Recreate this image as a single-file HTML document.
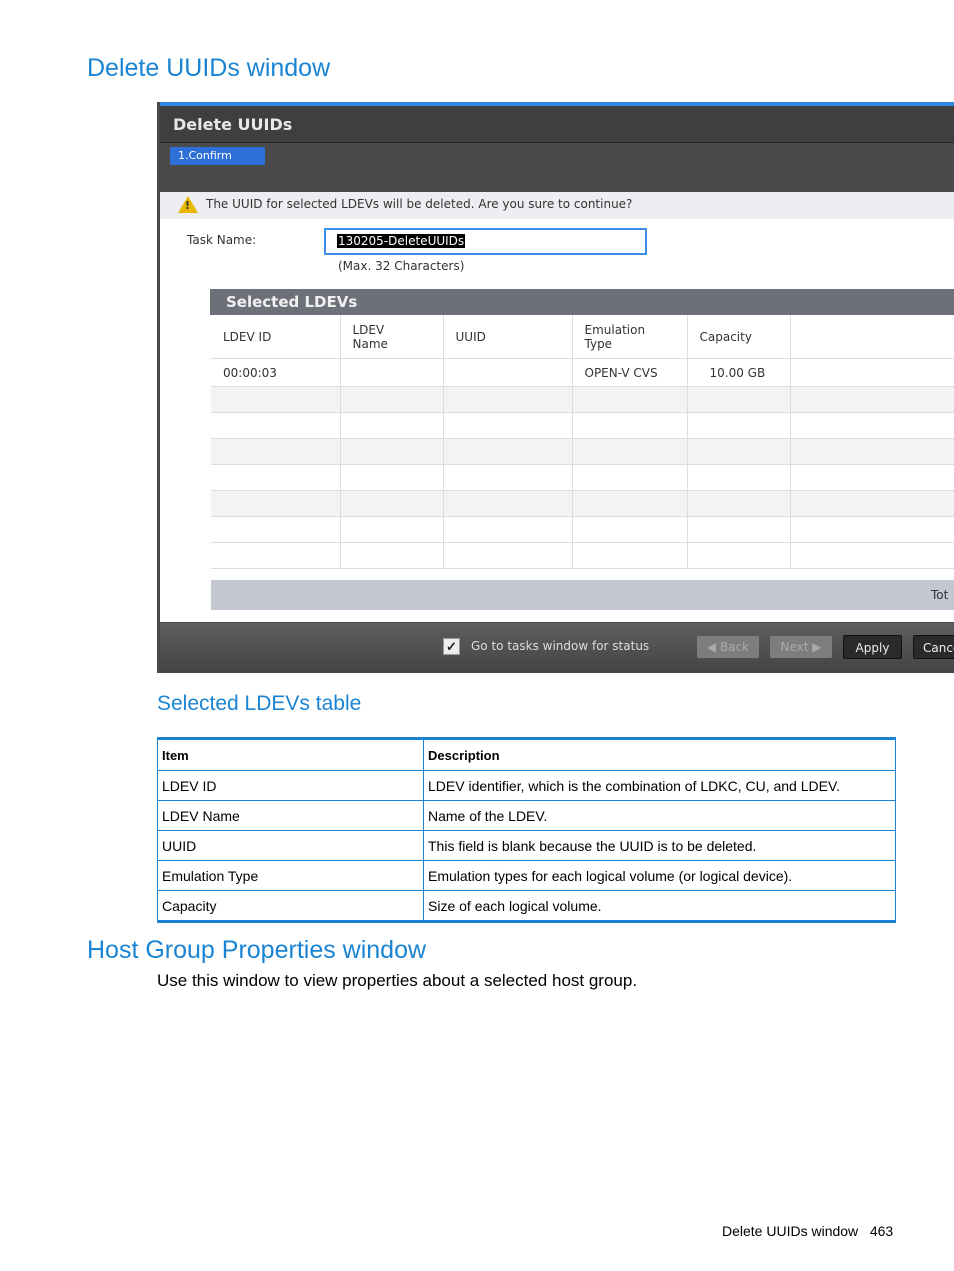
<!DOCTYPE html><html><head><style>
body{margin:0;width:954px;height:1271px;position:relative;background:#fff;font-family:"Liberation Sans",sans-serif;overflow:hidden}
.a{position:absolute}
h1{position:absolute;margin:0;font-weight:normal;color:#1a84d3;font-size:25px}
.s{font-family:"DejaVu Sans",sans-serif;font-size:12px;color:#333}
.dt{position:absolute;left:157px;top:737px;width:739px;border-collapse:collapse;font-size:14px;color:#000}
.dt td{border:1px solid #1a84d3;height:30px;padding:0 4px;box-sizing:border-box}
.dt tr:first-child td{border-top:3px solid #1a84d3;font-weight:bold;font-size:13px;height:32px}
.dt tr:last-child td{border-bottom:3px solid #1a84d3;height:31px}
.g td{border-right:1px solid #ddd;border-bottom:1px solid #ddd;height:25px;padding:0 12px}
</style></head><body>
<h1 style="left:87px;top:54px">Delete UUIDs window</h1>
<div class="a" style="left:157px;top:102px;width:797px;height:571px;background:#4a4a4a"></div>
<div class="a" style="left:160px;top:102px;width:794px;height:4px;background:#2d8be0"></div>
<div class="a" style="left:160px;top:106px;width:794px;height:36px;background:#3f3f3f;border-bottom:1px solid #222"></div>
<div class="a s" style="left:173px;top:115px;color:#e8e8e8;font-weight:bold;font-size:16px">Delete UUIDs</div>
<div class="a s" style="left:170px;top:147px;width:95px;height:18px;background:#2e6fd8;color:#fff;font-size:11px;line-height:18px;padding-left:8px;box-sizing:border-box">1.Confirm</div>
<div class="a" style="left:160px;top:192px;width:794px;height:430px;background:#fff"></div>
<div class="a" style="left:160px;top:192px;width:794px;height:27px;background:#eceef1"></div>
<div class="a" style="left:178px;top:196px;width:0;height:0;border-left:10px solid transparent;border-right:10px solid transparent;border-bottom:17px solid #e8b800"></div>
<div class="a s" style="left:185px;top:199px;font-size:11px;font-weight:bold">!</div>
<div class="a s" style="left:206px;top:197px">The UUID for selected LDEVs will be deleted. Are you sure to continue?</div>
<div class="a s" style="left:187px;top:233px">Task Name:</div>
<div class="a" style="left:324px;top:228px;width:323px;height:27px;border:2px solid #3d8ee6;box-sizing:border-box"></div>
<div class="a s" style="left:337px;top:234px;background:#000;color:#fff;padding:0 1px;line-height:14px">130205-DeleteUUIDs</div>
<div class="a s" style="left:338px;top:259px">(Max. 32 Characters)</div>
<div class="a" style="left:210px;top:289px;width:744px;height:26px;background:#6e7079"></div>
<div class="a s" style="left:226px;top:293px;color:#f0f0f0;font-weight:bold;font-size:15px">Selected LDEVs</div>
<table class="a s" style="left:211px;top:315px;border-collapse:collapse;width:760px;table-layout:fixed;background:#fff">
<colgroup><col style="width:129px"><col style="width:103px"><col style="width:129px"><col style="width:115px"><col style="width:103px"><col></colgroup>
<tr class="g"><td style="height:43px">LDEV ID</td><td>LDEV<br>Name</td><td>UUID</td><td>Emulation<br>Type</td><td>Capacity</td><td></td></tr>
<tr class="g"><td style="height:27px">00:00:03</td><td></td><td></td><td>OPEN-V CVS</td><td style="padding-left:22px">10.00 GB</td><td></td></tr>
<tr class="g" style="background:#f3f3f3"><td></td><td></td><td></td><td></td><td></td><td></td></tr>
<tr class="g"><td></td><td></td><td></td><td></td><td></td><td></td></tr>
<tr class="g" style="background:#f3f3f3"><td></td><td></td><td></td><td></td><td></td><td></td></tr>
<tr class="g"><td></td><td></td><td></td><td></td><td></td><td></td></tr>
<tr class="g" style="background:#f3f3f3"><td></td><td></td><td></td><td></td><td></td><td></td></tr>
<tr class="g"><td></td><td></td><td></td><td></td><td></td><td></td></tr>
<tr class="g"><td style="height:13px"></td><td></td><td></td><td></td><td></td><td></td></tr>
</table>
<div class="a" style="left:211px;top:580px;width:743px;height:30px;background:#c3c7d1"></div>
<div class="a s" style="left:931px;top:588px">Tot</div>
<div class="a" style="left:160px;top:623px;width:794px;height:50px;background:linear-gradient(#5e5e5e,#444)"></div>
<div class="a" style="left:443px;top:638px;width:15px;height:15px;background:#eee;border:1px solid #999;color:#222;font-size:13px;line-height:15px;text-align:center;font-weight:bold">✓</div>
<div class="a s" style="left:471px;top:639px;color:#ddd">Go to tasks window for status</div>
<div class="a s" style="left:697px;top:636px;width:62px;height:22px;background:#7d7d7d;color:#aaa;line-height:22px;text-align:center;border-radius:2px">◀ Back</div>
<div class="a s" style="left:770px;top:636px;width:62px;height:22px;background:#7d7d7d;color:#aaa;line-height:22px;text-align:center;border-radius:2px">Next ▶</div>
<div class="a s" style="left:843px;top:635px;width:59px;height:24px;background:#2a2a2a;color:#eee;line-height:24px;text-align:center;border:1px solid #111;border-radius:2px;box-sizing:border-box">Apply</div>
<div class="a s" style="left:913px;top:635px;width:60px;height:24px;background:#2a2a2a;color:#eee;line-height:24px;padding-left:9px;border:1px solid #111;border-radius:2px;box-sizing:border-box">Cancel</div>
<h1 style="left:157px;top:692px;font-size:21px">Selected LDEVs table</h1>
<table class="dt">
<tr><td style="width:266px">Item</td><td>Description</td></tr>
<tr><td>LDEV ID</td><td>LDEV identifier, which is the combination of LDKC, CU, and LDEV.</td></tr>
<tr><td>LDEV Name</td><td>Name of the LDEV.</td></tr>
<tr><td>UUID</td><td>This field is blank because the UUID is to be deleted.</td></tr>
<tr><td>Emulation Type</td><td>Emulation types for each logical volume (or logical device).</td></tr>
<tr><td>Capacity</td><td>Size of each logical volume.</td></tr>
</table>
<h1 style="left:87px;top:936px">Host Group Properties window</h1>
<div class="a" style="left:157px;top:971px;font-size:17px">Use this window to view properties about a selected host group.</div>
<div class="a" style="left:722px;top:1223px;font-size:14px">Delete UUIDs window &nbsp;&nbsp;463</div>
</body></html>
